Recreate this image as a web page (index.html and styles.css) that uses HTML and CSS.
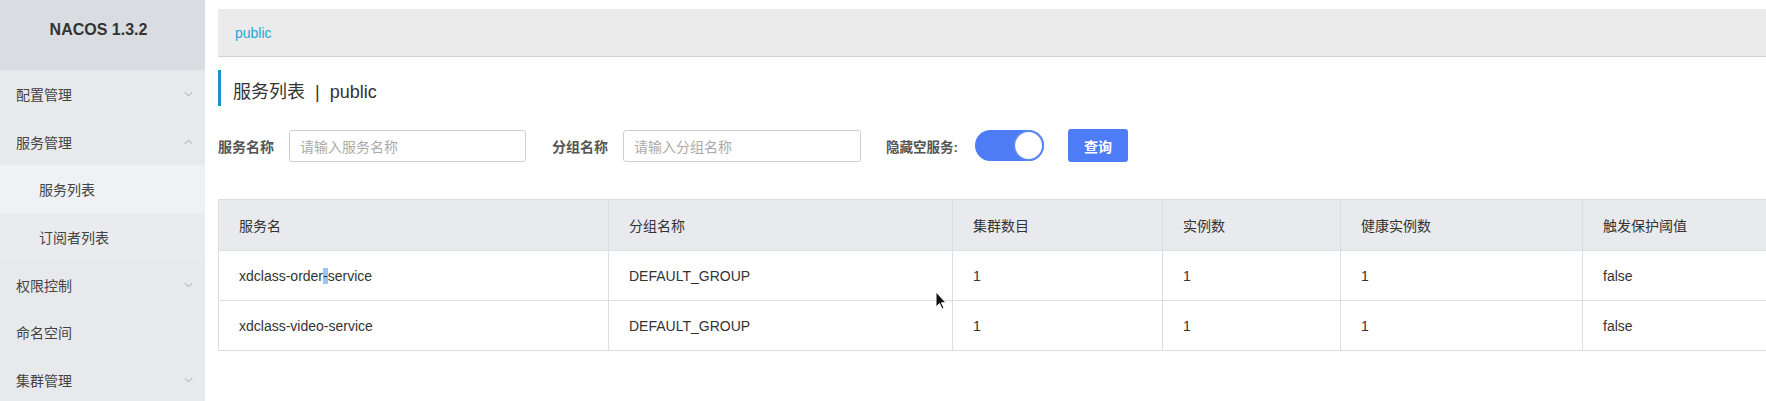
FILE: index.html
```html
<!DOCTYPE html>
<html lang="zh">
<head>
<meta charset="utf-8">
<title>Nacos</title>
<link rel="stylesheet" href="styles.css">
</head>
<body>
<div class="layout">
  <aside class="sidebar">
    <div class="brand">NACOS 1.3.2</div>
    <ul class="menu">
      <li class="menu-item">配置管理<svg class="chev" viewBox="0 0 10 6"><path d="M1 1l4 4 4-4"/></svg></li>
      <li class="menu-item">服务管理<svg class="chev" viewBox="0 0 10 6"><path d="M1 5l4-4 4 4"/></svg></li>
      <li class="menu-sub active">服务列表</li>
      <li class="menu-sub">订阅者列表</li>
      <li class="menu-item">权限控制<svg class="chev" viewBox="0 0 10 6"><path d="M1 1l4 4 4-4"/></svg></li>
      <li class="menu-item">命名空间</li>
      <li class="menu-item">集群管理<svg class="chev" viewBox="0 0 10 6"><path d="M1 1l4 4 4-4"/></svg></li>
    </ul>
  </aside>
  <main class="main">
    <div class="ns-bar"><span class="ns-link">public</span></div>
    <h2 class="page-title">服务列表 &nbsp;|&nbsp; public</h2>
    <div class="filters">
      <label class="f-label">服务名称</label>
      <div class="f-input f-input-1">请输入服务名称</div>
      <label class="f-label f-gap">分组名称</label>
      <div class="f-input f-input-2">请输入分组名称</div>
      <label class="f-label f-gap f-label-sm">隐藏空服务:</label>
      <div class="switch"><span class="knob"></span></div>
      <button class="btn">查询</button>
    </div>
    <div class="table-wrap">
      <table class="grid">
        <colgroup>
          <col class="c1"><col class="c2"><col class="c3"><col class="c4"><col class="c5"><col class="c6">
        </colgroup>
        <thead>
          <tr><th>服务名</th><th>分组名称</th><th>集群数目</th><th>实例数</th><th>健康实例数</th><th>触发保护阈值</th></tr>
        </thead>
        <tbody>
          <tr><td>xdclass-order<span class="sel">-</span>service</td><td>DEFAULT_GROUP</td><td>1</td><td>1</td><td>1</td><td>false</td></tr>
          <tr><td>xdclass-video-service</td><td>DEFAULT_GROUP</td><td>1</td><td>1</td><td>1</td><td>false</td></tr>
        </tbody>
      </table>
      <svg class="cursor" viewBox="0 0 12 19" width="12" height="19"><path d="M1 1v15l3.5-3.5 2.5 5.5 2-1-2.5-5.2H11z" fill="#111" stroke="#fff" stroke-width="1"/></svg>
    </div>
  </main>
</div>
</body>
</html>
```

FILE: styles.css
```css
* { box-sizing: border-box; }
html, body { margin: 0; padding: 0; }
body {
  font-family: "Liberation Sans", "Noto Sans CJK SC", sans-serif;
  font-size: 14px;
  color: #333;
  background: #fff;
  width: 1766px;
  height: 401px;
  overflow: hidden;
}
.layout { display: flex; height: 401px; }

.sidebar {
  width: 205px;
  flex: none;
  background: #e7e9ed;
  height: 100%;
}
.brand {
  height: 70px;
  background: #d9dde2;
  display: flex;
  align-items: center;
  justify-content: center;
  font-weight: bold;
  font-size: 16px;
  color: #333;
  padding-right: 8px;
  padding-bottom: 10px;
}
.menu { list-style: none; margin: 0; padding: 0; }
.menu-item, .menu-sub {
  height: 47.7px;
  display: flex;
  align-items: center;
  padding-left: 16px;
  padding-right: 12px;
  color: #444;
  font-size: 14px;
  position: relative;
}
.menu-item { justify-content: space-between; }
.menu-sub { padding-left: 39px; background: #e9ebee; }
.menu-sub.active { background: #eff1f4; }
.chev {
  width: 9px;
  height: 6px;
  fill: none;
  stroke: #989ba1;
  stroke-width: 1;
}

.main {
  flex: 1;
  min-width: 0;
  overflow: hidden;
  padding: 9px 0 0 13px;
}
.ns-bar {
  height: 48px;
  background: #ebebeb;
  border-bottom: 1px solid #d3d3d3;
  display: flex;
  align-items: center;
  padding-left: 17px;
}
.ns-link { color: #29a6d4; font-size: 14px; }

.page-title {
  margin: 13px 0 0 0;
  height: 36px;
  padding-top: 9px;
  line-height: 27px;
  border-left: 3px solid #1e8fcc;
  padding-left: 12px;
  font-size: 18px;
  font-weight: normal;
  color: #333;
}

.filters {
  display: flex;
  align-items: center;
  margin-top: 23px;
  height: 33px;
}
.f-label {
  font-weight: bold;
  font-size: 14px;
  color: #555;
  margin-right: 15px;
}
.f-gap { margin-left: 26px; }
.f-label-sm { font-size: 13.5px; margin-right: 17px; margin-left: 25px; }
.f-input {
  height: 32px;
  border: 1px solid #cfcfcf;
  border-radius: 3px;
  padding-left: 10px;
  display: flex;
  align-items: center;
  color: #aaa;
  font-size: 14px;
  background: #fff;
}
.f-input-1 { width: 237px; }
.f-input-2 { width: 238px; }
.switch {
  width: 69px;
  height: 31px;
  border-radius: 16px;
  background: #4d7cf6;
  position: relative;
  flex: none;
}
.knob {
  position: absolute;
  right: 0;
  top: 0;
  width: 31px;
  height: 31px;
  border-radius: 50%;
  background: #fff;
  border: 2px solid #5b86f6;
}
.btn {
  margin-left: 24px;
  width: 60px;
  height: 33px;
  border: none;
  border-radius: 3px;
  background: #4d7cf6;
  color: #fff;
  font-family: inherit;
  font-size: 14px;
  font-weight: bold;
  padding: 0;
}

.table-wrap {
  margin-top: 37px;
  position: relative;
}
.grid {
  border-collapse: collapse;
  width: 1620px;
  table-layout: fixed;
  border: 1px solid #dcdee3;
}
.c1 { width: 390px; }
.c2 { width: 344px; }
.c3 { width: 210px; }
.c4 { width: 178px; }
.c5 { width: 242px; }
.c6 { width: 256px; }
.grid th, .grid td {
  height: 50px;
  padding: 0 20px;
  text-align: left;
  border: 1px solid #dcdee3;
  font-size: 14px;
  color: #333;
  white-space: nowrap;
}
.grid th {
  background: #e9eaee;
  font-weight: normal;
  height: 51px;
}
.grid td { background: #fff; }
.sel { background: #9cc3f5; }
.cursor {
  position: absolute;
  left: 717px;
  top: 92px;
}
```
